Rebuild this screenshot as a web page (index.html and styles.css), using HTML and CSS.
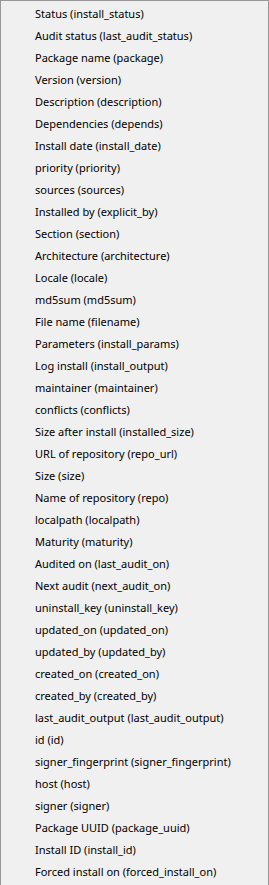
FILE: index.html
```html
<!DOCTYPE html>
<html lang="en">
<head>
  <meta charset="UTF-8">
  <title>Columns</title>
  <link rel="stylesheet" href="styles.css">
</head>
<body>

<!-- COLUMN CHOOSER MENU -->
<ul class="menu">
  <li>Status (install_status)</li>
  <li>Audit status (last_audit_status)</li>
  <li>Package name (package)</li>
  <li>Version (version)</li>
  <li>Description (description)</li>
  <li>Dependencies (depends)</li>
  <li>Install date (install_date)</li>
  <li>priority (priority)</li>
  <li>sources (sources)</li>
  <li>Installed by (explicit_by)</li>
  <li>Section (section)</li>
  <li>Architecture (architecture)</li>
  <li>Locale (locale)</li>
  <li>md5sum (md5sum)</li>
  <li>File name (filename)</li>
  <li>Parameters (install_params)</li>
  <li>Log install (install_output)</li>
  <li>maintainer (maintainer)</li>
  <li>conflicts (conflicts)</li>
  <li>Size after install (installed_size)</li>
  <li>URL of repository (repo_url)</li>
  <li>Size (size)</li>
  <li>Name of repository (repo)</li>
  <li>localpath (localpath)</li>
  <li>Maturity (maturity)</li>
  <li>Audited on (last_audit_on)</li>
  <li>Next audit (next_audit_on)</li>
  <li>uninstall_key (uninstall_key)</li>
  <li>updated_on (updated_on)</li>
  <li>updated_by (updated_by)</li>
  <li>created_on (created_on)</li>
  <li>created_by (created_by)</li>
  <li>last_audit_output (last_audit_output)</li>
  <li>id (id)</li>
  <li>signer_fingerprint (signer_fingerprint)</li>
  <li>host (host)</li>
  <li>signer (signer)</li>
  <li>Package UUID (package_uuid)</li>
  <li>Install ID (install_id)</li>
  <li>Forced install on (forced_install_on)</li>
</ul>

</body>
</html>
```

FILE: styles.css
```css
body { margin: 0; background: #f0f0f0; font-family: "Noto Sans", "Open Sans", sans-serif; }
.menu {
  list-style: none;
  margin: 0;
  padding: 2px 0;
  width: 269px;
  height: 885px;
  box-sizing: border-box;
  background: #f0f0f0;
  border: 1px solid #979797;
  border-bottom: none;
}
.menu li {
  height: 22px;
  line-height: 22px;
  padding-left: 34px;
  font-size: 11px;
  color: #000;
  white-space: nowrap;
}
```
